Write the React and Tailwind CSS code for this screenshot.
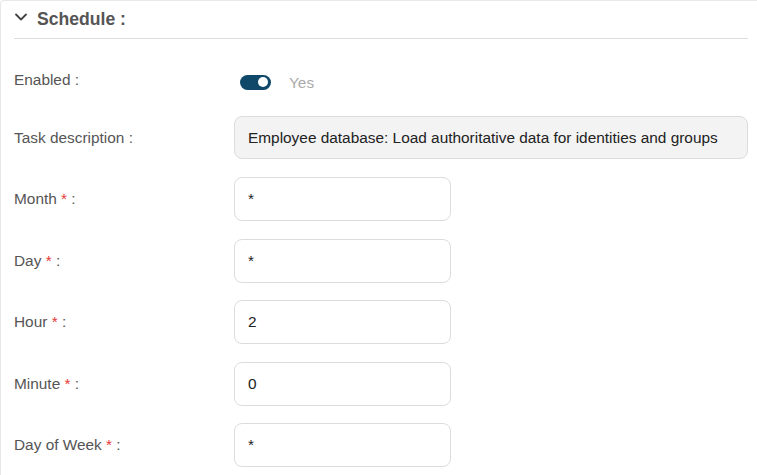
import React from 'react';
import { ChevronDown } from 'lucide-react';

const fields = [
  { label: 'Month', value: '*' },
  { label: 'Day', value: '*' },
  { label: 'Hour', value: '2' },
  { label: 'Minute', value: '0' },
  { label: 'Day of Week', value: '*' },
];

const Label = ({ children, required, className = '' }) => (
  <div className={`w-[220px] shrink-0 text-[15.4px] text-[#555] ${className}`}>
    {children}
    {required && <span className="text-[#e53935]"> *</span>} :
  </div>
);

const App = () => {
  return (
    <div
      className="h-[475px] w-[757px] overflow-hidden bg-white"
      style={{ fontFamily: '"Liberation Sans", Arial, sans-serif' }}
    >
      <div className="h-full rounded-tl border-l border-t border-[#e8e8e8] pl-[13px] pr-[9px]">
        <div className="flex h-[38px] items-center gap-[6px] border-b border-[#dedede]">
          <ChevronDown size={20} strokeWidth={2.2} className="-ml-[3px] -mt-[6px] text-[#444]" />
          <span className="text-[17.6px] font-bold text-[#555]">Schedule :</span>
        </div>

        <div className="flex flex-col">
          <div className="mt-[20px] flex h-[44px] items-center">
            <Label className="-mt-[3px]">Enabled</Label>
            <div className="ml-[6px] flex items-center gap-[18px] pt-[3px]">
              <div className="flex h-[15px] w-[31px] items-center justify-end rounded-full bg-[#0f4869] pr-[3px]">
                <div className="h-[10px] w-[10px] rounded-full bg-white" />
              </div>
              <span className="text-[15.4px] text-[#aaa]">Yes</span>
            </div>
          </div>

          <div className="mt-[13px] flex h-[43px] items-center">
            <Label>Task description</Label>
            <div className="flex h-full flex-1 items-center rounded-lg border border-[#dcdcdc] bg-[#f3f3f3] px-[13px] text-[15.4px] text-[#222]">
              Employee database: Load authoritative data for identities and groups
            </div>
          </div>

          <div className="mt-[18px] flex flex-col gap-[17.5px]">
            {fields.map((f) => (
              <div key={f.label} className="flex h-[44px] items-center">
                <Label required>{f.label}</Label>
                <div className="flex h-full w-[217px] items-center rounded-lg border border-[#dcdcdc] bg-white px-[13px] text-[15.4px] text-[#222]">
                  {f.value}
                </div>
              </div>
            ))}
          </div>
        </div>
      </div>
    </div>
  );
};

export default App;
